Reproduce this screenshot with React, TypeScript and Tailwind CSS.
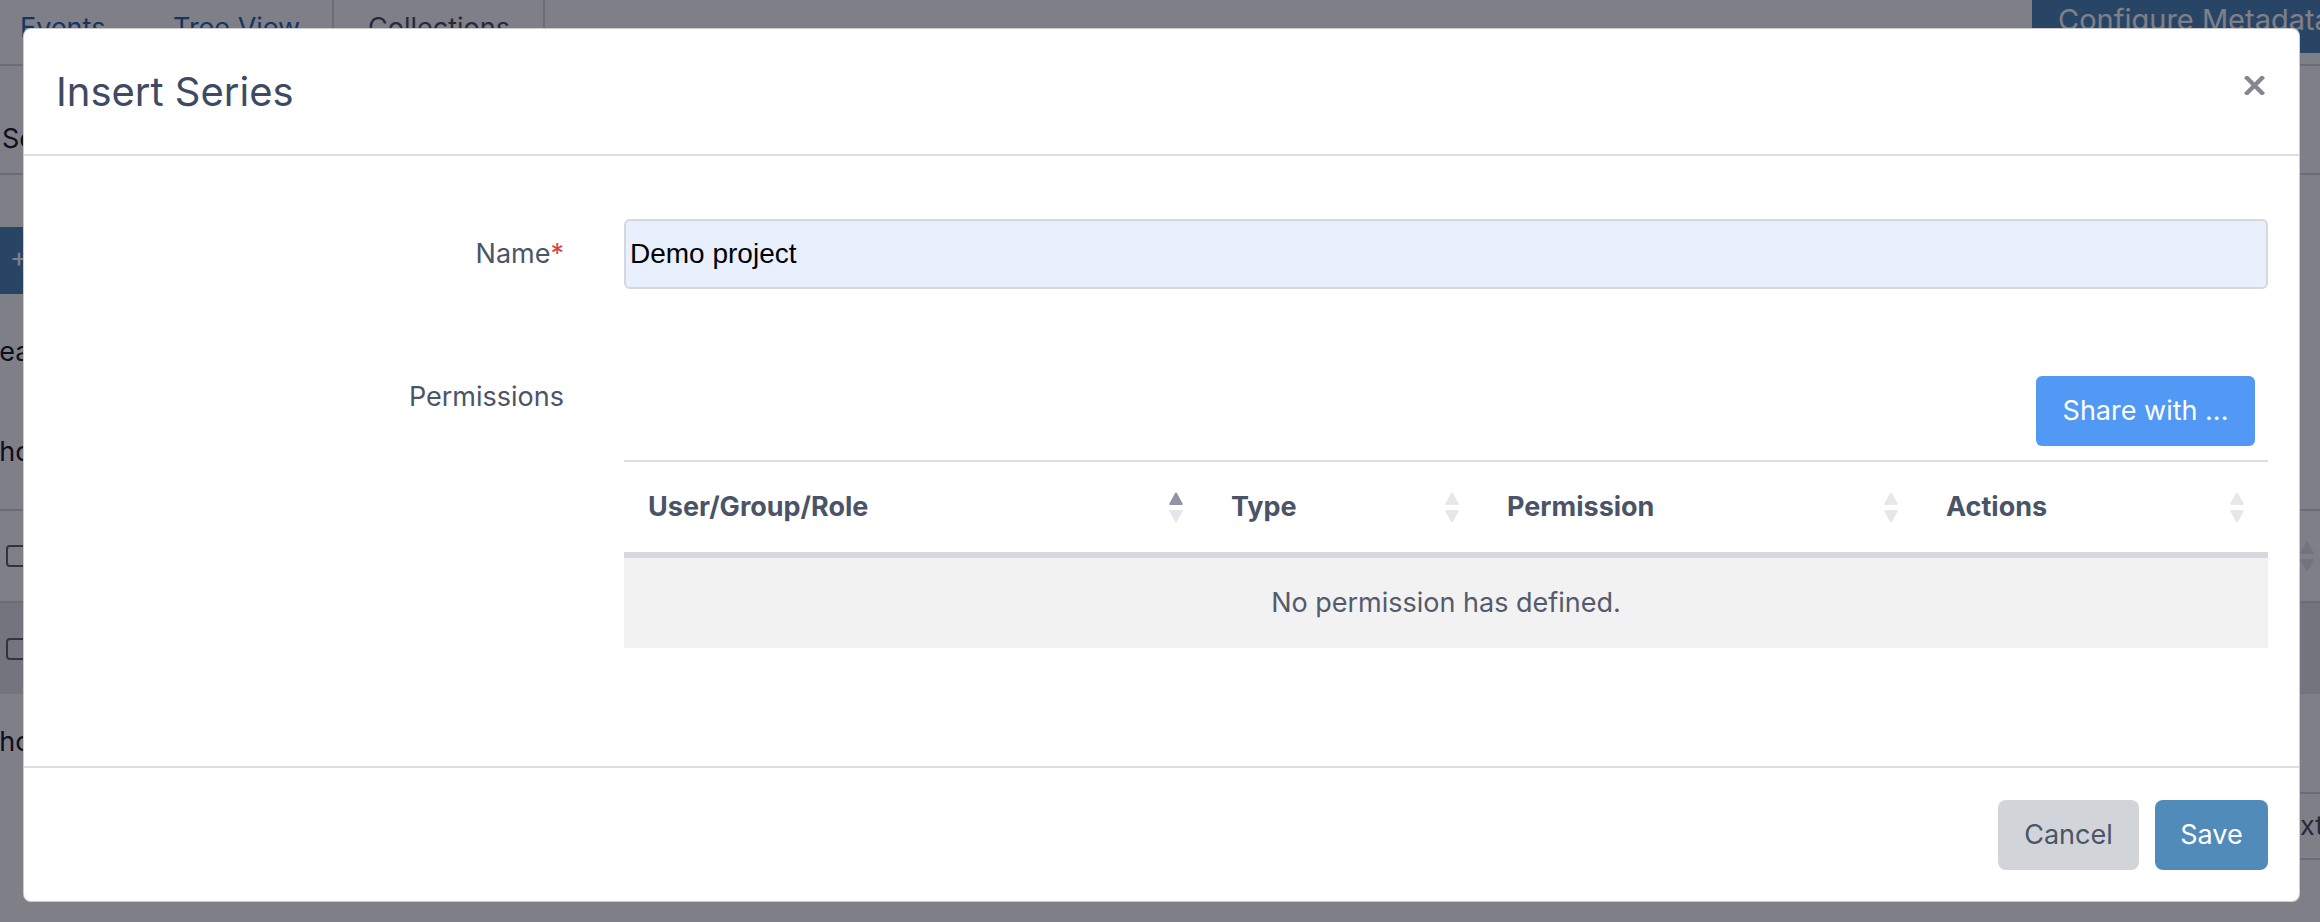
import React from 'react'

// sort arrows in table header; first column is the sorted one
function SortArrows({ active }: { active?: boolean }) {
  return (
    <svg width="14" height="31" viewBox="0 0 14 31" className="shrink-0">
      <path d="M6 1.2 Q7 -0.4 8 1.2 L13.6 11.6 Q14.2 13 12.8 13 L1.2 13 Q-0.2 13 0.4 11.6 Z" fill={active ? '#8f95a3' : '#e6e7eb'} />
      <path d="M6 29.8 Q7 31.4 8 29.8 L13.6 19.4 Q14.2 18 12.8 18 L1.2 18 Q-0.2 18 0.4 19.4 Z" fill="#e6e7eb" />
    </svg>
  )
}

function Checkbox() {
  return <span className="inline-block h-[22px] w-[22px] rounded-[4px] border-2 border-[#666]" />
}

const columns = [
  { title: 'User/Group/Role', width: 'w-[583px]', active: true },
  { title: 'Type', width: 'w-[276px]' },
  { title: 'Permission', width: 'w-[439px]' },
  { title: 'Actions', width: 'flex-1' },
]

export default function App() {
  return (
    <div className="relative h-[922px] w-[2320px] overflow-hidden bg-white text-[27px] text-[#2d3748] [font-family:Inter,sans-serif]">
      {/* page behind the modal */}
      <div className="flex h-[66px] border-b-2 border-[#d9d9de]">
        <div className="w-[153px] pl-[20px] pt-[8px] text-[#2b6cb0]">Events</div>
        <div className="w-[181px] border-r-2 border-[#d9d9de] pl-[20px] pt-[8px] text-[#2b6cb0]">Tree View</div>
        <div className="w-[211px] border-r-2 border-[#d9d9de] pl-[34px] pt-[8px] text-[#4a5568]">Collections</div>
        <div className="ml-auto -mt-[14px] flex h-[67px] w-[288px] items-center overflow-hidden whitespace-nowrap bg-[#518bb9] pl-[26px] text-[29px] text-white">
          Configure Metadata
        </div>
      </div>
      <div className="flex h-[109px] items-end border-b-2 border-[#d9d9de] pb-[14px] pl-[2px] text-[#1a202c]">Series</div>
      <div className="pt-[52px]">
        <div className="flex h-[67px] w-[220px] items-center bg-[#518bb9] pl-[10px] text-white">+ Add series</div>
      </div>
      <div className="-ml-[18px] mt-[38px] leading-[40px] text-[#1a202c]">Search:</div>
      <div className="-ml-[18px] mt-[60px] leading-[40px] text-[#1a202c]">Show 10 entries</div>
      <div className="mt-[37px] border-t-2 border-[#d9d9de]">
        <div className="flex h-[92px] items-center justify-between border-b-2 border-[#d9d9de] pl-[6px] pr-[6px]">
          <Checkbox />
          <SortArrows />
        </div>
        <div className="flex h-[91px] items-center bg-[#e9e9ec] pl-[6px]">
          <Checkbox />
        </div>
      </div>
      <div className="-ml-[18px] mt-[28px] leading-[40px] text-[#1a202c]">Showing 1 to 1 of 1 entries</div>
      <div className="mt-[30px] flex justify-end -mr-[24px]">
        <div className="flex h-[68px] items-center border-y-2 border-l-2 border-[#d9d9de] px-[20px] text-[#4a5568]">Previous</div>
        <div className="flex h-[68px] items-center border-y-2 border-l-2 border-[#d9d9de] px-[20px] text-[#4a5568]">Next</div>
      </div>

      {/* backdrop */}
      <div className="absolute inset-0 bg-[#000012]/50" />

      {/* modal */}
      <div className="absolute left-[23px] top-[28px] flex w-[2277px] flex-col rounded-[8px] border border-black/20 bg-white">
        <div className="flex h-[127px] items-center justify-between border-b-2 border-[#dcdce1] pl-[32px] pr-[34px]">
          <h4 className="text-[40px] leading-none text-[#3e4a63]">Insert Series</h4>
          <button className="-mt-[12px]" aria-label="Close">
            <svg width="21" height="19" viewBox="0 0 21 19">
              <path d="M3 2 L18 17 M18 2 L3 17" stroke="#86868f" strokeWidth="4.4" strokeLinecap="square" />
            </svg>
          </button>
        </div>

        <div className="pb-[118px] pl-[32px] pr-[31px] pt-[63px]">
          <div className="flex items-center">
            <label className="w-[508px] shrink-0 text-right text-[#4a5568]">
              Name<span className="text-[#e53e3e]">*</span>
            </label>
            <input
              className="ml-[60px] h-[70px] flex-1 rounded-[6px] border-2 border-[#d5d7dd] bg-[#e8f0fe] pl-[4px] text-[28px] text-black outline-none [font-family:'Liberation_Sans',Arial,sans-serif]"
              defaultValue="Demo project"
            />
          </div>

          <div className="mt-[87px] flex items-start">
            <div className="w-[508px] shrink-0 text-right leading-[42px] text-[#4a5568]">Permissions</div>
            <div className="ml-[60px] flex flex-1 flex-col">
              <button className="mr-[13px] h-[70px] w-[219px] self-end rounded-[6px] bg-[#5298f5] text-white">
                Share with ...
              </button>
              <div className="mt-[14px] border-t-2 border-[#dcdde1]">
                <div className="flex h-[96px] border-b-[6px] border-[#d8d9de]">
                  {columns.map((c) => (
                    <div
                      key={c.title}
                      className={`${c.width} flex items-center justify-between px-[24px] font-bold text-[#4b5467]`}
                    >
                      <span>{c.title}</span>
                      <SortArrows active={c.active} />
                    </div>
                  ))}
                </div>
                <div className="flex h-[90px] items-center justify-center bg-[#f2f2f2] text-[#535b6c]">
                  No permission has defined.
                </div>
              </div>
            </div>
          </div>
        </div>

        <div className="flex justify-end gap-[16px] border-t-2 border-[#dcdce1] pb-[31px] pr-[31px] pt-[32px]">
          <button className="h-[70px] w-[141px] rounded-[8px] bg-[#d1d4d9] text-[#4a5568]">Cancel</button>
          <button className="h-[70px] w-[113px] rounded-[8px] bg-[#518bb9] text-white">Save</button>
        </div>
      </div>
    </div>
  )
}
